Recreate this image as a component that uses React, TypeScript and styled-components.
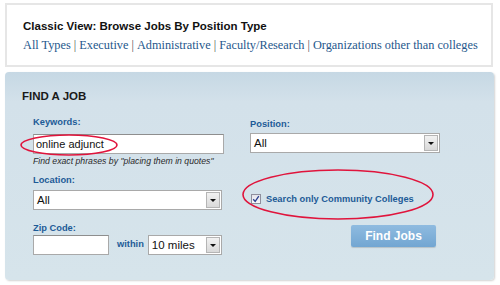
import React from "react";
import styled, { createGlobalStyle } from "styled-components";

const Global = createGlobalStyle`
  html, body { margin: 0; padding: 0; background: #ffffff; }
  body { font-family: "Liberation Sans", Arial, sans-serif; }
`;

const Page = styled.div`
  width: 500px;
  height: 285px;
  padding: 3px 0 0 5px;
  box-sizing: border-box;
  display: flex;
  flex-direction: column;
  gap: 5px;
`;

const BrowseBox = styled.div`
  width: 488px;
  height: 64px;
  box-sizing: border-box;
  border: 2px solid #e6e6e6;
  background: #fff;
  padding: 14px 0 0 16px;
  display: flex;
  flex-direction: column;
  gap: 5px;
`;

const BrowseTitle = styled.div`
  font-family: "Liberation Sans", Arial, sans-serif;
  font-weight: bold;
  font-size: 11.5px;
  line-height: 14px;
  color: #111;
`;

const LinkRow = styled.div`
  font-family: "Liberation Serif", "Times New Roman", serif;
  font-size: 12.3px;
  line-height: 15px;
  color: #25578c;
  white-space: nowrap;
`;

const TypeLink = styled.a`
  color: #25578c;
  text-decoration: none;
`;

const Sep = styled.span`
  color: #555;
  margin: 0 3px;
`;

const Panel = styled.div`
  position: relative;
  width: 489px;
  height: 208px;
  box-sizing: border-box;
  border-radius: 4px;
  background: linear-gradient(#c6d8e4 0px, #d3e1ea 30px, #d6e4eb 100%);
  box-shadow: 1px 1px 2px rgba(0, 0, 0, 0.18);
  padding: 17px 0 0 17px;
`;

const PanelHeading = styled.div`
  font-weight: bold;
  font-size: 11.5px;
  line-height: 14px;
  color: #1a1a1a;
`;

const FormGrid = styled.div`
  margin: 13px 0 0 11px;
  display: grid;
  grid-template-columns: 192px 190px;
  column-gap: 25px;
  row-gap: 7px;
`;

const Field = styled.div<{ $gap?: number; $top?: number }>`
  display: flex;
  flex-direction: column;
  gap: ${(p) => p.$gap ?? 4}px;
  margin-top: ${(p) => p.$top ?? 0}px;
`;

const Label = styled.label`
  font-weight: bold;
  font-size: 9.3px;
  line-height: 12px;
  color: #1d5b97;
`;

const TextBox = styled.div<{ $w: number }>`
  width: ${(p) => p.$w}px;
  height: 20px;
  box-sizing: border-box;
  background: #fff;
  border: 1px solid #a9a9a9;
  border-top-color: #8e8e8e;
  font-size: 11px;
  line-height: 18px;
  padding-left: 2px;
  color: #111;
`;

const Hint = styled.div`
  font-style: italic;
  font-size: 8.7px;
  line-height: 11px;
  color: #2a2a2a;
  margin-top: -4px;
`;

const SelectBox = styled.div<{ $w: number }>`
  width: ${(p) => p.$w}px;
  height: 20px;
  box-sizing: border-box;
  background: #fff;
  border: 1px solid #a9a9a9;
  display: flex;
  align-items: stretch;
`;

const SelectValue = styled.div`
  flex: 1;
  font-size: 11.5px;
  line-height: 18px;
  padding-left: 3px;
  color: #111;
`;

const ArrowBtn = styled.div`
  width: 14px;
  margin: 1px;
  box-sizing: border-box;
  border: 1px solid #b5b5b5;
  background: linear-gradient(#f2f2f2, #d9d9d9);
  display: flex;
  align-items: center;
  justify-content: center;
  &::after {
    content: "";
    border-left: 3px solid transparent;
    border-right: 3px solid transparent;
    border-top: 3px solid #111;
  }
`;

const CheckRow = styled.div`
  align-self: end;
  display: flex;
  align-items: center;
  gap: 5px;
  margin: 0 0 5px 1px;
`;

const CheckBox = styled.span`
  width: 10px;
  height: 10px;
  box-sizing: border-box;
  border: 1px solid #8f8f9d;
  background: linear-gradient(#e4e4ea, #f8f8fb);
  display: flex;
  align-items: center;
  justify-content: center;
`;

const ZipRow = styled.div`
  display: flex;
  align-items: center;
  gap: 8px;
`;

const Within = styled.span`
  font-weight: bold;
  font-size: 9.3px;
  color: #1d5b97;
  margin-right: -4px;
  position: relative;
  top: -1px;
`;

const ButtonCell = styled.div`
  display: flex;
  justify-content: flex-end;
  align-items: flex-start;
  padding: 8px 4px 0 0;
`;

const FindButton = styled.button`
  width: 85px;
  height: 22px;
  border: none;
  border-radius: 2px;
  background: linear-gradient(#8fbbe0, #72a6d2);
  box-shadow: 0 1px 1px rgba(0, 0, 0, 0.15);
  color: #fff;
  font-family: "Liberation Sans", Arial, sans-serif;
  font-weight: bold;
  font-size: 12px;
  padding: 0;
`;

const Circle = styled.svg<{ $x: number; $y: number }>`
  position: absolute;
  left: ${(p) => p.$x}px;
  top: ${(p) => p.$y}px;
  overflow: visible;
  pointer-events: none;
`;

function Select({ w, value }: { w: number; value: string }) {
  return (
    <SelectBox $w={w}>
      <SelectValue>{value}</SelectValue>
      <ArrowBtn />
    </SelectBox>
  );
}

export default function App() {
  const types = [
    "All Types",
    "Executive",
    "Administrative",
    "Faculty/Research",
    "Organizations other than colleges",
  ];
  return (
    <>
      <Global />
      <Page>
        <BrowseBox>
          <BrowseTitle>Classic View: Browse Jobs By Position Type</BrowseTitle>
          <LinkRow>
            {types.map((t, i) => (
              <React.Fragment key={t}>
                {i > 0 && <Sep>|</Sep>}
                <TypeLink href="#">{t}</TypeLink>
              </React.Fragment>
            ))}
          </LinkRow>
        </BrowseBox>
        <Panel>
          <PanelHeading>FIND A JOB</PanelHeading>
          <FormGrid>
            <Field $gap={6}>
              <Label>Keywords:</Label>
              <TextBox $w={191}>online adjunct</TextBox>
              <Hint>Find exact phrases by "placing them in quotes"</Hint>
            </Field>
            <Field $gap={3} $top={2}>
              <Label>Position:</Label>
              <Select w={190} value="All" />
            </Field>
            <Field $gap={4}>
              <Label>Location:</Label>
              <Select w={189} value="All" />
            </Field>
            <CheckRow>
              <CheckBox>
                <svg width="8" height="8" viewBox="0 0 8 8">
                  <path d="M1.2 4.2 L3.2 6.4 L6.8 1.2" fill="none" stroke="#2a3f8f" strokeWidth="1.3" />
                </svg>
              </CheckBox>
              <Label>Search only Community Colleges</Label>
            </CheckRow>
            <Field $gap={1} $top={5}>
              <Label>Zip Code:</Label>
              <ZipRow>
                <TextBox $w={76} />
                <Within>within</Within>
                <Select w={74} value="10 miles" />
              </ZipRow>
            </Field>
            <ButtonCell>
              <FindButton>Find Jobs</FindButton>
            </ButtonCell>
          </FormGrid>
          <Circle $x={15} $y={62} width="98" height="22" viewBox="0 0 98 22">
            <ellipse cx="49" cy="11" rx="48" ry="10" fill="none" stroke="#e0143c" strokeWidth="1.6" />
          </Circle>
          <Circle $x={237} $y={97} width="192" height="51" viewBox="0 0 192 51">
            <ellipse cx="96" cy="25.5" rx="95" ry="24.5" fill="none" stroke="#e0143c" strokeWidth="1.6" />
          </Circle>
        </Panel>
      </Page>
    </>
  );
}
